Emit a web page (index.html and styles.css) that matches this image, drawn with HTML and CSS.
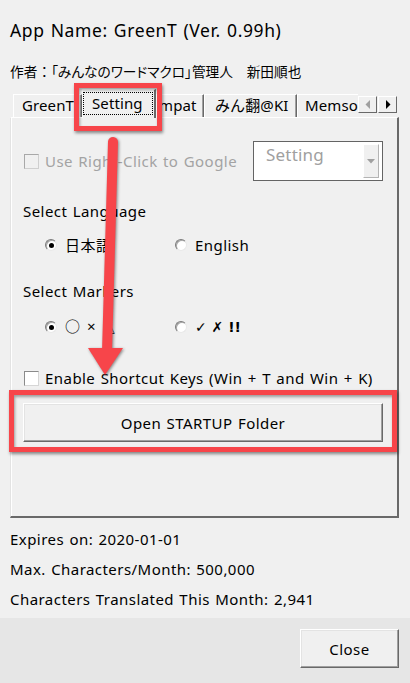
FILE: index.html
```html
<!DOCTYPE html>
<html lang="ja">
<head>
<meta charset="utf-8">
<title>GreenT Settings</title>
<link rel="stylesheet" href="styles.css">
</head>
<body>
<div class="app">
  <header class="header">
    <div class="title">App Name: GreenT (Ver. 0.99h)</div>
    <div class="author"><span class="plain">作者：</span>「みんなのワードマクロ」管理人　新田順也</div>
  </header>

  <div class="tabs">
    <div class="tab-list">
      <div class="tab tab-greent">GreenT</div>
      <div class="tab tab-active"><span class="focus">Setting</span></div>
      <div class="tab tab-mpat">mpat</div>
      <div class="tab tab-minhon">みん翻@KI</div>
      <div class="tab tab-memsou">Memsource</div>
    </div>
    <div class="scroll">
      <div class="sbtn"><svg width="6" height="9" viewBox="0 0 6 9"><polygon points="5,0 5,9 0.5,4.5" fill="#a0a0a0"/></svg></div>
      <div class="sbtn"><svg width="6" height="9" viewBox="0 0 6 9"><polygon points="1,0 1,9 5.5,4.5" fill="#000"/></svg></div>
    </div>
  </div>

  <section class="panel">
    <div class="row-top">
      <div class="check disabled"><span class="box"></span><span>Use Right-Click to Google</span></div>
      <div class="combo">
        <span class="combo-text">Setting</span>
        <span class="combo-btn"><svg width="8" height="5" viewBox="0 0 8 5"><polygon points="0,0 8,0 4,4.5" fill="#a0a0a0"/></svg></span>
      </div>
    </div>

    <div class="label">Select Language</div>
    <div class="radios">
      <div class="radio-item first"><span class="radio checked"></span><span>日本語</span></div>
      <div class="radio-item"><span class="radio"></span><span>English</span></div>
    </div>

    <div class="label label-markers">Select Markers</div>
    <div class="radios radios-markers">
      <div class="radio-item first"><span class="radio checked"></span><span class="mk"><span class="circle">○</span> × <span class="tri">△</span></span></div>
      <div class="radio-item"><span class="radio"></span><span class="mk2">✓ ✗ !!</span></div>
    </div>

    <div class="check shortcut"><span class="box"></span><span>Enable Shortcut Keys (Win + T and Win + K)</span></div>

    <button class="btn btn-startup">Open STARTUP Folder</button>
  </section>

  <div class="info">
    <div>Expires on: 2020-01-01</div>
    <div>Max. Characters/Month: 500,000</div>
    <div>Characters Translated This Month: 2,941</div>
  </div>

  <footer class="footer">
    <button class="btn btn-close">Close</button>
  </footer>
</div>

<div class="hl hl-tab"></div>
<div class="hl hl-btn"></div>
<svg class="arrow" width="410" height="683" viewBox="0 0 410 683">
  <line x1="113" y1="142" x2="107" y2="352" stroke="#f7454a" stroke-width="10" stroke-linecap="round"/>
  <polygon points="88,348 123,348 105,375" fill="#f7454a"/>
</svg>
</body>
</html>
```

FILE: styles.css
```css
* { box-sizing: border-box; }
html, body { margin: 0; padding: 0; }
body {
  width: 410px;
  height: 683px;
  background: #f0f0f0;
  font-family: "Noto Sans", "Noto Sans CJK JP", sans-serif;
  font-size: 15px;
  letter-spacing: 0.45px;
  word-spacing: 1px;
  color: #000;
  position: relative;
  overflow: hidden;
}
.app { display: flex; flex-direction: column; height: 683px; }

.header { padding: 19px 10px 0; }
.title { font-size: 17.5px; line-height: 22px; letter-spacing: 0.6px; }
.author {
  margin-top: 20px;
  font-family: "Noto Sans CJK JP", sans-serif;
  font-size: 13.7px;
  line-height: 20px;
  letter-spacing: 0;
  word-spacing: 0;
  font-feature-settings: "palt";
}
.plain { font-feature-settings: normal; }

/* tabs */
.tabs {
  display: flex;
  height: 29px;
  margin-top: 8px;
  margin-bottom: -1px;
  padding-left: 13px;
  position: relative;
  z-index: 2;
}
.tab-list {
  display: flex;
  align-items: flex-start;
  width: 345px;
  overflow: hidden;
}
.tab {
  flex: none;
  height: 23px;
  margin-top: 5px;
  border-top: 1px solid #fff;
  border-left: 1px solid #fff;
  border-right: 1px solid #696969;
  box-shadow: inset -1px 0 #a0a0a0;
  padding-left: 8px;
  line-height: 20px;
  letter-spacing: 0.1px;
  white-space: nowrap;
  overflow: hidden;
  background: #f0f0f0;
}
.tab-greent { width: 69px; }
.tab-active {
  width: 74px;
  height: 29px;
  margin-top: 0;
  padding: 2px 0 3px 0;
  border-right: 2px solid #696969;
  box-shadow: none;
  position: relative;
  z-index: 1;
}
.focus {
  display: block;
  height: 23px;
  margin-right: 1px;
  border: 1px dotted #000;
  padding-left: 8px;
  line-height: 20px;
}
.tab-mpat { width: 48px; padding-left: 2px; }
.tab-minhon { width: 93px; padding-left: 10px; }
.tab-memsou { width: 90px; padding-left: 7px; }

.scroll { display: flex; gap: 1px; margin-top: 7px; height: 17px; }
.sbtn {
  width: 19px;
  height: 17px;
  background: #f0f0f0;
  border: 1px solid;
  border-color: #fff #696969 #696969 #fff;
  display: flex;
  align-items: center;
  justify-content: center;
}

/* panel */
.panel {
  margin-left: 10px;
  width: 389px;
  height: 401px;
  border-top: 1px solid #fff;
  border-left: 1px solid #e3e3e3;
  border-right: 2px solid #696969;
  border-bottom: 2px solid #696969;
  box-shadow: inset 1px 0 #fff;
  padding: 23px 14px 0 12px;
  display: flex;
  flex-direction: column;
  line-height: 20px;
}
.row-top { display: flex; align-items: center; height: 40px; }
.check { display: flex; align-items: center; gap: 6px; }
.box {
  width: 15px;
  height: 15px;
  margin-left: 1px;
  background: #fff;
  border: 1px solid;
  border-color: #8a8a8a #d6d6d6 #d6d6d6 #8a8a8a;
}
.check.disabled { color: #a3a3a3; }
.check.disabled .box { background: #f0f0f0; border-color: #a8a8a8 #cfcfcf #cfcfcf #a8a8a8; }

.combo {
  margin-left: auto;
  width: 130px;
  height: 40px;
  border: 1px solid #646464;
  background: #fff;
  display: flex;
}
.combo-text {
  flex: 1;
  padding: 2px 0 0 12px;
  font-size: 17px;
  line-height: 22px;
  letter-spacing: 0.2px;
  color: #a0a0a0;
}
.combo-btn {
  width: 16px;
  margin: 2px 3px 2px 0;
  background: #f0f0f0;
  border: 1px solid;
  border-color: #fff #b4b4b4 #b4b4b4 #fff;
  display: flex;
  align-items: center;
  justify-content: center;
}

.label { margin-top: 20px; }
.label-markers { margin-top: 26px; }
.radios { display: flex; margin-top: 14px; padding-left: 22px; }
.radios-markers { margin-top: 15px; }
.radio-item { display: flex; align-items: center; gap: 8px; }
.radio-item.first { width: 130px; }
.radio {
  width: 12px;
  height: 12px;
  border-radius: 50%;
  background: #fff;
  border: 1px solid;
  border-color: #7a7a7a #e8e8e8 #e8e8e8 #7a7a7a;
  box-shadow: inset 1px 1px 0 #a8a8a8;
  display: flex;
  align-items: center;
  justify-content: center;
}
.radio.checked::after {
  content: "";
  width: 5px;
  height: 5px;
  border-radius: 50%;
  background: #000;
}
.mk { font-family: "Noto Sans", "DejaVu Sans", sans-serif; letter-spacing: 1px; }
.circle { font-family: "Noto Sans CJK JP", sans-serif; }
.tri { font-size: 12px; margin-left: 3px; font-family: "DejaVu Sans", sans-serif; }
.mk2 { font-family: "DejaVu Sans", sans-serif; font-weight: bold; font-size: 14px; letter-spacing: 0; word-spacing: 0; }

.shortcut { margin-top: 30px; }

.btn {
  font: inherit;
  font-size: 15px;
  letter-spacing: 0.45px;
  word-spacing: 1px;
  color: #000;
  background: #f0f0f0;
  border: 1px solid;
  border-color: #fff #696969 #696969 #fff;
  box-shadow: inset -1px -1px 0 #a0a0a0, inset 1px 1px 0 #e3e3e3;
  padding: 0;
  line-height: 20px;
}
.btn-startup { margin-top: 15px; width: 100%; height: 39px; }

.info {
  margin-top: 11px;
  padding-left: 10px;
  display: flex;
  flex-direction: column;
  gap: 10px;
  line-height: 20px;
}

.footer {
  margin-top: 9px;
  flex: 1;
  background: #e6e6e6;
  display: flex;
  justify-content: flex-end;
  align-items: flex-start;
  padding: 11px 11px 0 0;
}
.btn-close { width: 99px; height: 39px; }

/* annotations */
.hl {
  position: absolute;
  border: 5px solid #f7454a;
  box-shadow: 1px 2px 3px rgba(0, 0, 0, 0.45), inset 1px 2px 3px rgba(0, 0, 0, 0.35);
  pointer-events: none;
  z-index: 5;
}
.hl-tab { left: 74px; top: 83px; width: 88px; height: 48px; }
.hl-btn { left: 9px; top: 390px; width: 388px; height: 62px; }

.arrow {
  position: absolute;
  left: 0;
  top: 0;
  z-index: 6;
  pointer-events: none;
  filter: drop-shadow(1px 1px 1.5px rgba(0, 0, 0, 0.45));
}
```
